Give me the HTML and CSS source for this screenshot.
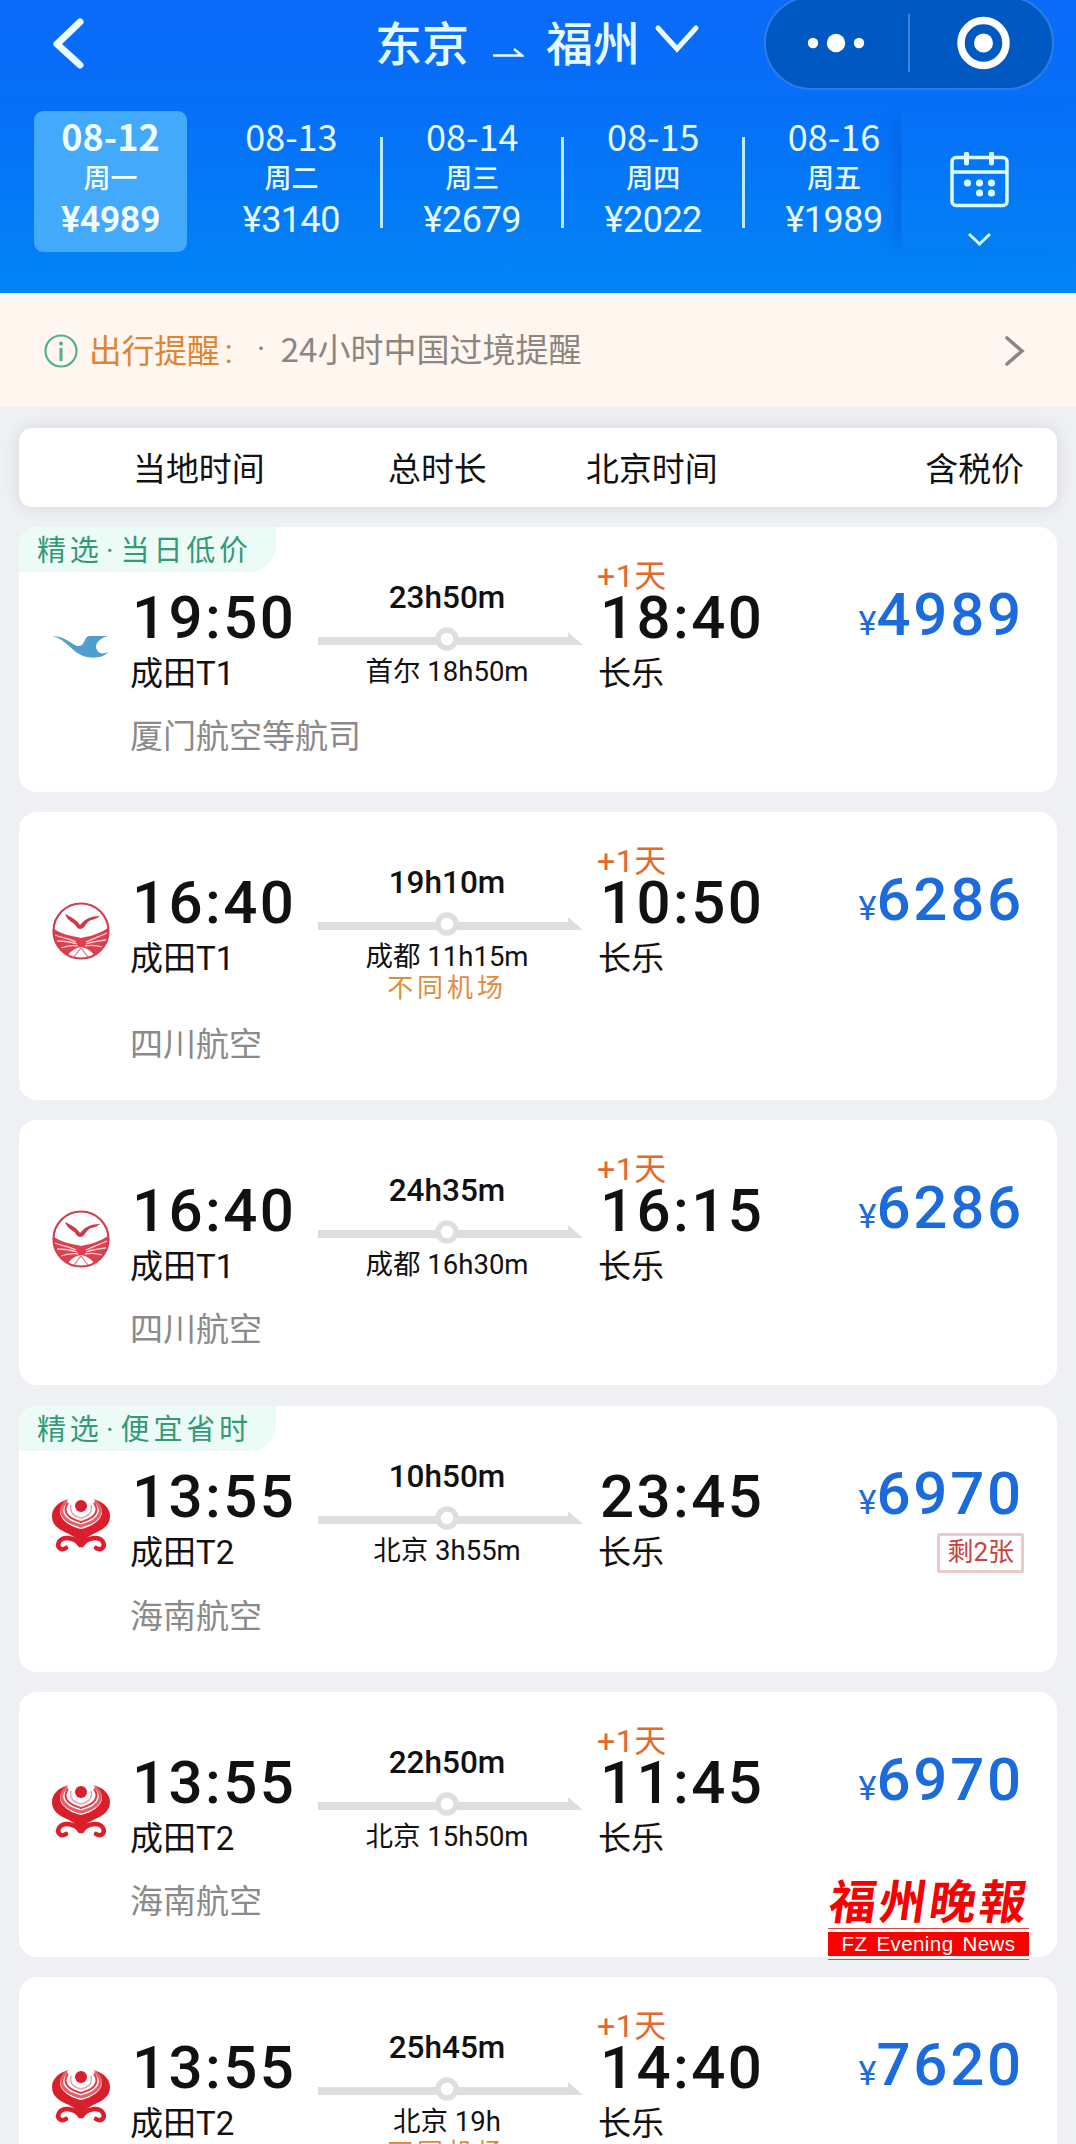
FILE: index.html
```html
<!DOCTYPE html>
<html lang="zh-CN">
<head>
    <meta charset="UTF-8">
    <meta name="viewport" content="width=device-width, initial-scale=1.0">
    <title>东京 - 福州 机票</title>
    <link rel="stylesheet" href="styles.css">
</head>
<body>
    <!-- shared icons -->
    <svg class="defs" width="0" height="0">
        <symbol id="line" viewBox="0 0 267 24">
            <path d="M0 10h250V5l15 13H0z" fill="#dedede"/>
            <circle cx="129" cy="12" r="9" fill="#fff" stroke="#dedede" stroke-width="5.5"/>
        </symbol>
        <symbol id="xiamen" viewBox="0 0 58 58">
            <path d="M1 19c8 0 14 4 20 8 3 2 6 3 9 1 3-3 3-9 8-9h18c-7 2-12 6-12 11 1 6 6 8 12 5-5 7-19 7-27 3C20 34 14 23 1 19z" fill="#4f9fce"/>
        </symbol>
        <symbol id="sichuan" viewBox="0 0 58 58">
            <circle cx="29" cy="29" r="27.5" fill="#fff"/>
            <path d="M2 27c8 5 16 7 23 8l4 1 4-1c7-1 15-4 23-9 1 13-5 21-13 26-9 5-20 5-28 0C6 47 1 39 2 27z" fill="#dc3f4e"/>
            <path d="M3 33c8 3 15 4 21 7M5 39c8 0 14 1 20 3M9 46c6-2 11-3 17-2M55 31c-9 4-15 6-21 9M54 38c-8 1-14 2-20 4M50 45c-6-2-11-2-17-1" fill="none" stroke="#f9d3d6" stroke-width="1.3"/>
            <path d="M16 53c3-4 7-7 13-8 6 1 10 4 13 8-7 5-19 5-26 0z" fill="#fff"/>
            <path d="M22 55l7-9 7 9" fill="none" stroke="#e8707b" stroke-width="1.2"/>
            <path d="M13 12c6 3 11 5 15 11 5-6 11-9 20-9-4 4-9 3-12 6s-4 7-8 7c-3 0-4-4-7-6s-6-4-8-9z" fill="#c93a4b"/>
            <circle cx="29" cy="29" r="27.5" fill="none" stroke="#d0404f" stroke-width="2.2"/>
        </symbol>
        <symbol id="hainan" viewBox="0 0 58 54">
            <path d="M17 1C6 4 0 10 0 18c0 10 8 14 17 18 6 3 9 6 12 10 3-4 6-7 12-10 9-4 17-8 17-18C58 10 52 4 41 1c6 4 9 8 9 13 0 8-11 15-21 17C19 29 8 22 8 14c0-5 3-9 9-13z" fill="#d81f2b"/>
            <path d="M15 3C10 7 9 11 10 15c2 7 11 11 19 13 8-2 17-6 19-13 1-4 0-8-5-12" fill="none" stroke="#e5606a" stroke-width="3"/>
            <path d="M16 5c-3 4-3 8-1 11 3 5 9 6 14 8 5-2 11-3 14-8 2-3 2-7-1-11" fill="none" stroke="#dc3d48" stroke-width="2"/>
            <path d="M19 7c-2 8 4 12 10 13 6-1 12-5 10-13" fill="none" stroke="#f0a0a6" stroke-width="1.5"/>
            <circle cx="29" cy="8" r="6" fill="#d81f2b"/>
            <path d="M28 47c-5-8-17-9-21-3-3 6 3 9 7 6M30 47c5-8 17-9 21-3 3 6-3 9-7 6" fill="none" stroke="#d81f2b" stroke-width="4.5" stroke-linecap="round"/>
        </symbol>
    </svg>

    <div class="page">
        <header class="header">
            <div class="nav">
                <svg class="back" width="36" height="54" viewBox="0 0 36 54"><path d="M30 5L7 27l23 21" fill="none" stroke="#effcff" stroke-width="7" stroke-linecap="round" stroke-linejoin="round"/></svg>
                <div class="route">
                    <span>东京</span>
                    <svg class="to" width="32" height="12" viewBox="0 0 32 12"><path d="M1 9.500h29L22 3" fill="none" stroke="#effcff" stroke-width="2.500"/></svg>
                    <span>福州</span>
                    <svg class="down" width="46" height="30" viewBox="0 0 46 30"><path d="M4 4l19 21L42 4" fill="none" stroke="#effcff" stroke-width="5" stroke-linecap="round"/></svg>
                </div>
                <div class="capsule">
                    <svg width="286" height="90" viewBox="0 0 286 90">
                        <circle cx="47" cy="45" r="5.200" fill="#fff"/>
                        <circle cx="70" cy="45" r="9.200" fill="#fff"/>
                        <circle cx="93" cy="45" r="5.200" fill="#fff"/>
                        <path d="M143 16v58" stroke="#3d84e0" stroke-width="2"/>
                        <circle cx="217.500" cy="45" r="22.500" fill="none" stroke="#fff" stroke-width="7.500"/>
                        <circle cx="217.500" cy="45" r="9.500" fill="#fff"/>
                    </svg>
                </div>
            </div>
            <div class="dates">
                <div class="date active"><b>08-12</b><span>周一</span><b>¥4989</b></div>
                <div class="date"><b>08-13</b><span>周二</span><b>¥3140</b></div>
                <div class="date split"><b>08-14</b><span>周三</span><b>¥2679</b></div>
                <div class="date split"><b>08-15</b><span>周四</span><b>¥2022</b></div>
                <div class="date split"><b>08-16</b><span>周五</span><b>¥1989</b></div>
                <div class="calendar">
                    <svg width="60" height="96" viewBox="0 0 60 96">
                        <g fill="none" stroke="#dcfaff" stroke-width="3.500">
                            <rect x="2" y="5.500" width="55" height="48" rx="4"/>
                            <path d="M2 20h55"/>
                            <path d="M16.500 2v9M41.500 2v9" stroke-width="5" stroke-linecap="round"/>
                            <path d="M19 82l10.500 10L40 82" stroke-width="3"/>
                        </g>
                        <g fill="#dcfaff">
                            <circle cx="17.500" cy="31" r="3.600"/><circle cx="29.500" cy="31" r="3.600"/><circle cx="41.500" cy="31" r="3.600"/>
                            <circle cx="29.500" cy="41" r="3.600"/><circle cx="41.500" cy="41" r="3.600"/>
                        </g>
                    </svg>
                </div>
            </div>
        </header>

        <div class="notice">
            <svg width="34" height="34" viewBox="0 0 34 34"><circle cx="17" cy="17" r="15.500" fill="none" stroke="#4fb28c" stroke-width="2.200"/><path d="M17 14v13" stroke="#4fb28c" stroke-width="3"/><circle cx="17" cy="9.500" r="2" fill="#4fb28c"/></svg>
            <span class="notice-title">出行提醒<i>:</i></span>
            <span class="notice-dot">·</span>
            <span class="notice-text">24小时中国过境提醒</span>
            <svg class="more" width="22" height="34" viewBox="0 0 22 34"><path d="M3 4l15 13L3 30" fill="none" stroke="#8b8680" stroke-width="3.600" stroke-linecap="round"/></svg>
        </div>

        <div class="columns">
            <span class="c1">当地时间</span>
            <span class="c2">总时长</span>
            <span class="c3">北京时间</span>
            <span class="c4">含税价</span>
        </div>

        <div class="list">
            <div class="card">
                <div class="tag">精选<i>·</i>当日低价</div>
                <div class="flight">
                    <svg class="logo"><use href="#xiamen"/></svg>
                    <div class="from"><div class="time">19:50</div><div class="airport">成田T1</div></div>
                    <div class="trip"><div class="duration">23h50m</div><svg class="line"><use href="#line"/></svg><div class="stop">首尔 18h50m</div></div>
                    <div class="arrive"><span class="plus">+1天</span><div class="time">18:40</div><div class="airport">长乐</div></div>
                    <div class="price"><div class="amount"><small>¥</small>4989</div></div>
                </div>
                <div class="airline">厦门航空等航司</div>
            </div>

            <div class="card">
                <div class="flight">
                    <svg class="logo"><use href="#sichuan"/></svg>
                    <div class="from"><div class="time">16:40</div><div class="airport">成田T1</div></div>
                    <div class="trip"><div class="duration">19h10m</div><svg class="line"><use href="#line"/></svg><div class="stop">成都 11h15m</div><div class="warn">不同机场</div></div>
                    <div class="arrive"><span class="plus">+1天</span><div class="time">10:50</div><div class="airport">长乐</div></div>
                    <div class="price"><div class="amount"><small>¥</small>6286</div></div>
                </div>
                <div class="airline">四川航空</div>
            </div>

            <div class="card">
                <div class="flight">
                    <svg class="logo"><use href="#sichuan"/></svg>
                    <div class="from"><div class="time">16:40</div><div class="airport">成田T1</div></div>
                    <div class="trip"><div class="duration">24h35m</div><svg class="line"><use href="#line"/></svg><div class="stop">成都 16h30m</div></div>
                    <div class="arrive"><span class="plus">+1天</span><div class="time">16:15</div><div class="airport">长乐</div></div>
                    <div class="price"><div class="amount"><small>¥</small>6286</div></div>
                </div>
                <div class="airline">四川航空</div>
            </div>

            <div class="card">
                <div class="tag">精选<i>·</i>便宜省时</div>
                <div class="flight">
                    <svg class="logo"><use href="#hainan"/></svg>
                    <div class="from"><div class="time">13:55</div><div class="airport">成田T2</div></div>
                    <div class="trip"><div class="duration">10h50m</div><svg class="line"><use href="#line"/></svg><div class="stop">北京 3h55m</div></div>
                    <div class="arrive"><div class="time">23:45</div><div class="airport">长乐</div></div>
                    <div class="price"><div class="amount"><small>¥</small>6970</div><div class="left">剩2张</div></div>
                </div>
                <div class="airline">海南航空</div>
            </div>

            <div class="card">
                <div class="flight">
                    <svg class="logo"><use href="#hainan"/></svg>
                    <div class="from"><div class="time">13:55</div><div class="airport">成田T2</div></div>
                    <div class="trip"><div class="duration">22h50m</div><svg class="line"><use href="#line"/></svg><div class="stop">北京 15h50m</div></div>
                    <div class="arrive"><span class="plus">+1天</span><div class="time">11:45</div><div class="airport">长乐</div></div>
                    <div class="price"><div class="amount"><small>¥</small>6970</div></div>
                </div>
                <div class="airline">海南航空</div>
                <div class="paper">
                    <div class="paper-name"><span>福</span><span>州</span><span>晚</span><span>報</span></div>
                    <div class="paper-en">FZ Evening News</div>
                </div>
            </div>

            <div class="card">
                <div class="flight">
                    <svg class="logo"><use href="#hainan"/></svg>
                    <div class="from"><div class="time">13:55</div><div class="airport">成田T2</div></div>
                    <div class="trip"><div class="duration">25h45m</div><svg class="line"><use href="#line"/></svg><div class="stop">北京 19h</div><div class="warn">不同机场</div></div>
                    <div class="arrive"><span class="plus">+1天</span><div class="time">14:40</div><div class="airport">长乐</div></div>
                    <div class="price"><div class="amount"><small>¥</small>7620</div></div>
                </div>
                <div class="airline">海南航空</div>
            </div>
        </div>
    </div>
</body>
</html>
```

FILE: styles.css
```css
* {
    box-sizing: border-box;
}
body {
    margin: 0;
    background-color: #eef0f4;
    font-family: Roboto, "Noto Sans CJK SC", sans-serif;
    color: #111;
}
svg {
    display: block;
    flex: none;
}
.defs {
    position: absolute;
}
.page {
    width: 1076px;
    height: 2144px;
    overflow: hidden;
}

/* header */
.header {
    height: 293px;
    background-image: linear-gradient(#0a6bf8, #066ff8 35%, #0284f5 100%);
    color: #e6fbff;
}
.nav {
    display: flex;
    height: 111px;
    padding-left: 50px;
}
.back {
    margin-top: 17px;
}
.route {
    display: flex;
    width: 388px;
    margin-left: 289px;
    margin-right: 1px;
    font-size: 47px;
    line-height: 90px;
    font-weight: 500;
    white-space: nowrap;
}
.to {
    margin: 46px 22px 0 23px;
}
.down {
    margin: 24px 0 0 14px;
}
.capsule {
    width: 290px;
    height: 94px;
    margin-top: -4px;
    border: 2px solid #2e7de6;
    border-radius: 47px;
    background-color: #0058c2;
}
.dates {
    display: flex;
    padding-left: 34px;
}
.date {
    display: flex;
    flex-direction: column;
    align-items: center;
    position: relative;
    width: 153px;
    height: 141px;
    margin-right: 27.9px;
    padding-top: 4px;
    border-radius: 9px;
    font-size: 36px;
    line-height: 40px;
}
.date b {
    font-weight: 400;
    letter-spacing: -0.5px;
}
.date b:first-child {
    font-family: "Noto Sans CJK SC", sans-serif;
    letter-spacing: 0;
}
.date span {
    margin-top: 3px;
    font-size: 27px;
    line-height: 42px;
    font-weight: 500;
}
.active {
    background-color: #43a9fb;
    color: #f2fdff;
}
.active b {
    font-weight: 600;
}
.split::before {
    content: "";
    position: absolute;
    left: -16px;
    top: 26px;
    width: 3px;
    height: 91px;
    background-color: #bdeaff;
}
.calendar {
    flex: 1;
    margin-left: -37px;
    padding: 41px 0 0 49px;
    box-shadow: -14px 0 14px -8px rgba(0, 80, 200, 0.4);
    height: 141px;
}

/* travel notice */
.notice {
    display: flex;
    align-items: center;
    height: 114px;
    padding: 0 50px 8px 44px;
    border-top: 9px solid #f9f8f7;
    background-color: #fff6ef;
    font-size: 32.7px;
    line-height: 40px;
}
.notice-title {
    margin: 2px 0 0 11px;
    color: #e08430;
}
.notice-title i {
    display: inline-block;
    width: 18px;
    text-align: center;
    font-style: normal;
}
.notice-dot {
    margin: -4px 0 0 19px;
    width: 12px;
    color: #8b8680;
}
.notice-text {
    margin: -6px 0 0 12px;
    color: #8b8680;
    font-family: "Noto Sans CJK SC", sans-serif;
    font-size: 33px;
}
.more {
    margin-left: auto;
}

/* column titles */
.columns {
    display: flex;
    width: 1038px;
    height: 79px;
    margin: 21px 19px 20px;
    border-radius: 13px;
    background-color: #fff;
    box-shadow: 0 0 16px rgba(80, 85, 110, 0.16);
    font-size: 32.9px;
    line-height: 84px;
}
.c1 {
    width: 255px;
    margin-left: 114px;
}
.c2 {
    width: 198px;
}
.c3 {
    flex: 1;
}
.c4 {
    margin-right: 33px;
}

/* flight cards */
.card {
    position: relative;
    width: 1038px;
    margin: 0 19px 20.2px;
    padding: 1px 0 35px;
    border-radius: 18px;
    background-color: #fff;
}
.tag {
    position: absolute;
    left: 0;
    top: 0;
    width: 257px;
    height: 45px;
    padding-left: 18px;
    border-radius: 18px 0 26px 0;
    background-color: #edfbf7;
    color: #339a77;
    font-size: 29px;
    line-height: 48px;
    letter-spacing: 3.8px;
    white-space: nowrap;
}
.tag i {
    display: inline-block;
    width: 18px;
    text-align: center;
    font-style: normal;
}
.flight {
    display: flex;
    padding: 54px 33px 0 33px;
}
.logo {
    width: 58px;
    height: 58px;
    margin: 35px 20px 0 0;
}
.from {
    width: 188px;
}
.time {
    margin-left: 2px;
    font-size: 60px;
    line-height: 72px;
    font-weight: 500;
    letter-spacing: 2.4px;
    white-space: nowrap;
}
.airport {
    height: 39px;
    font-size: 33px;
    line-height: 39px;
}
.trip {
    width: 258px;
    text-align: center;
}
.duration {
    height: 34px;
    font-size: 31.5px;
    line-height: 32px;
    font-weight: 500;
}
.line {
    width: 267px;
    height: 24px;
    margin-top: 11px;
}
.stop {
    height: 39px;
    font-size: 27.5px;
    line-height: 41px;
}
.warn {
    height: 26px;
    color: #e08c3c;
    font-size: 26px;
    line-height: 27px;
    letter-spacing: 3.9px;
}
.arrive {
    position: relative;
    margin-left: 22px;
}
.plus {
    position: absolute;
    left: -1px;
    top: -26px;
    color: #e0692e;
    font-size: 32px;
    line-height: 40px;
    letter-spacing: 0.6px;
    white-space: nowrap;
}
.price {
    display: flex;
    flex-direction: column;
    align-items: flex-end;
    margin-left: auto;
}
.amount {
    height: 66px;
    color: #1c6bdc;
    font-size: 60px;
    line-height: 66px;
    font-weight: 500;
    letter-spacing: 2.8px;
}
.amount small {
    font-size: 34px;
    font-weight: 400;
    letter-spacing: 0;
}
.left {
    height: 40px;
    margin-top: 6px;
    padding: 0 7px;
    border: 3px solid #edcaca;
    border-radius: 2px;
    color: #c8423f;
    font-size: 26px;
    line-height: 33px;
}
.airline {
    margin: 24px 0 0 111px;
    color: #8a8a8a;
    font-size: 33px;
    line-height: 40px;
}

/* newspaper mark */
.paper {
    position: absolute;
    z-index: 1;
    left: 809px;
    top: 178px;
    width: 201px;
    color: #f60000;
}
.paper-name {
    display: flex;
    justify-content: space-between;
    height: 58px;
    padding: 0 2px;
    font-family: "Noto Sans CJK TC", sans-serif;
    font-size: 47px;
    line-height: 58px;
    font-weight: 700;
    transform: skewX(-8deg);
}
.paper-en {
    height: 24px;
    margin-top: 4px;
    background-color: #fa0000;
    box-shadow: 0 -3px 0 #fff, 0 -4px 0 #d44, 0 3px 0 #f3f3f5, 0 4px 0 #d44;
    color: #fff;
    font-family: "Liberation Sans", Arial, sans-serif;
    font-size: 20.5px;
    line-height: 24px;
    text-align: center;
    letter-spacing: 0.4px;
    word-spacing: 3px;
    white-space: nowrap;
}
```
